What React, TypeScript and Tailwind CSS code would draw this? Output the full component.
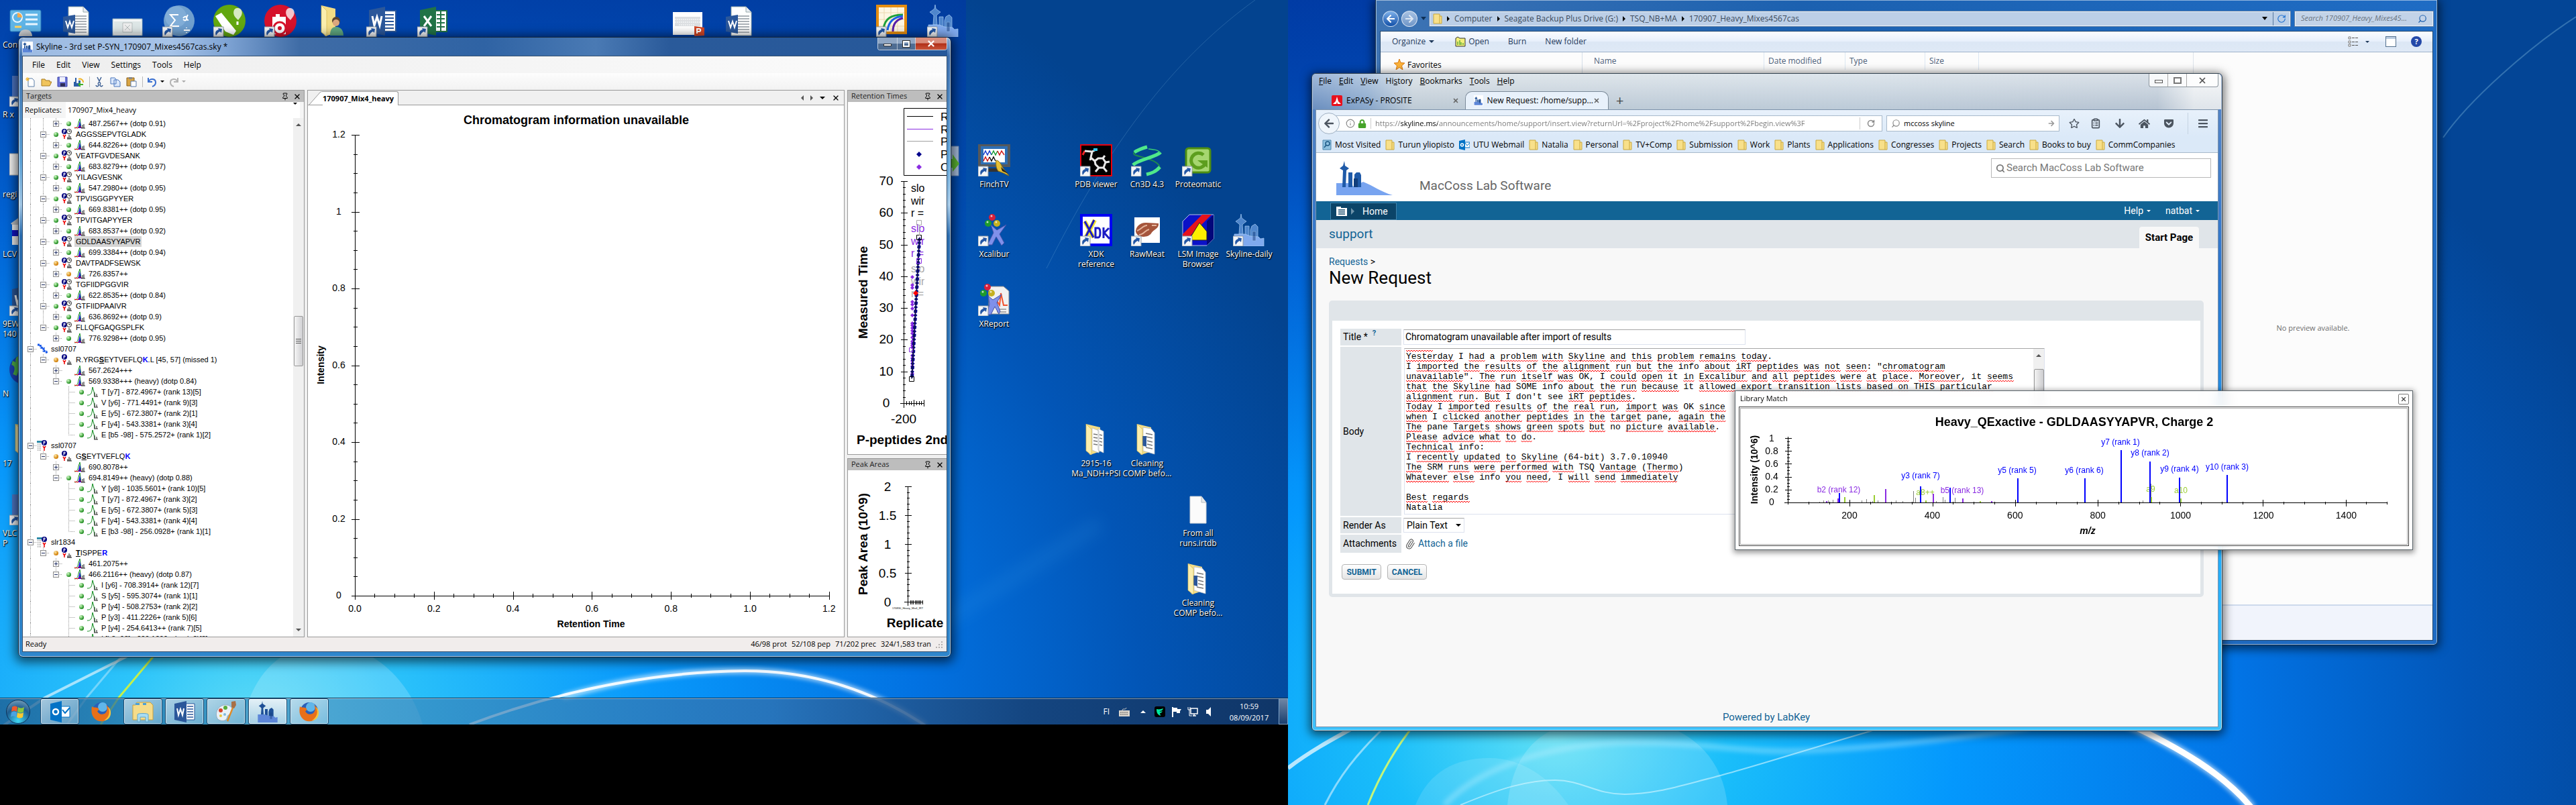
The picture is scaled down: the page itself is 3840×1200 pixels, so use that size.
import type { ReactNode } from 'react';
import { FaArrowDown, FaArrowLeft, FaBars, FaGetPocket, FaHome, FaLock, FaRegStar } from 'react-icons/fa';
import { ClipboardList, Info, Paperclip, Pin, RotateCw, Search, X } from 'lucide-react';

const range = (n: number) => Array.from({ length: n }, (_, i) => i);

/* ---------- small shared drawings ---------- */

function SkylineArt({ dark = false }: { dark?: boolean }) {
  const top = dark ? '#1d4f96' : '#4f86cc';
  const low = dark ? '#5c86d8' : '#7fa9ee';
  return (
    <g>
      <path d="M12 0l1 6 4 3 3 2-4 3-2 2 1 14h-6l1-14-2-2-4-3 3-2 4-3z" fill={top} />
      <path d="M18 18h6v24h-6zM26 24l2-6 5-3 4 4v23H26z" fill={top} />
      <path d="M2 30h16l8 3 12 1 3 3 5-1v12H2z" fill={low} />
      <path d="M29 26h5v14h-5z" fill="#173f80" opacity=".5" />
    </g>
  );
}

function ShortcutArrow() {
  return (
    <g>
      <path d="M0 33h15v15H0z" fill="#f4f6f8" stroke="#8b98a5" />
      <path d="M4 46c-2-5 0-8 4-9l-1-2 6 1-1 6-2-2c-3 1-4 3-6 6z" fill="#2457a5" />
    </g>
  );
}

function Ball({ cx, cy, color }: { cx: number; cy: number; color: string }) {
  return (
    <g>
      <circle cx={cx} cy={cy} r="5" fill={color} />
      <circle cx={cx - 1} cy={cy - 2} r="1.5" fill="#fff" opacity=".7" />
    </g>
  );
}

function FolderShape({ children }: { children?: ReactNode }) {
  return (
    <g>
      <path d="M9 1l21 5v36L15 47 9 40z" fill="#f3dc85" />
      {children}
      <path d="M9 1l8 8v38L9 41z" fill="#fbeeae" stroke="#d6b955" strokeWidth=".7" />
    </g>
  );
}

function DocLines({ x, y, n, w }: { x: number; y: number; n: number; w: number }) {
  return (
    <>
      {range(n).map((i) => (
        <path key={i} d={`M${x} ${y + i * 4}h${w}`} stroke="#8f979f" strokeWidth="1.5" />
      ))}
    </>
  );
}

const ART: Record<string, ReactNode> = {
  control: (
    <>
      <rect x="1" y="8" width="46" height="32" rx="2" fill="#5fb4e6" stroke="#2a79b8" />
      <circle cx="12" cy="19" r="7" fill="none" stroke="#e9f6ff" strokeWidth="2" />
      <path d="M12 19v-7a7 7 0 0 1 7 7z" fill="#f5a94b" />
      <path d="M24 15h18M24 22h18M24 29h18" stroke="#e9f6ff" strokeWidth="3" />
      <path d="M8 33h10" stroke="#ffd25e" strokeWidth="3" />
      <path d="M14 47c0-6 4-10 10-10s10 4 10 10z" fill="#c9cccf" />
    </>
  ),
  wordDoc: (
    <>
      <path d="M12 3h22l8 8v35H12z" fill="#fff" stroke="#9aa" />
      <path d="M34 3v8h8" fill="#e8ecf2" stroke="#9aa" />
      <DocLines x={22} y={17} n={7} w={17} />
      <path d="M4 18l18-3v28L4 40z" fill="#2b579a" />
      <path d="M8 24l3 10 3-9 3 9 3-10" fill="none" stroke="#fff" strokeWidth="2" />
    </>
  ),
  thumb: (
    <>
      <path d="M2 21h44v25H2z" fill="#f3f5f6" stroke="#8aa8b8" />
      <path d="M4 25h40v18H4z" fill="#dde6e6" />
      <path d="M17 27h14v14H17zM20 30l8 8M28 30l-8 8" fill="#eee" stroke="#b5bdbd" />
    </>
  ),
  sigma: (
    <>
      <circle cx="25" cy="24" r="23" fill="#6f9fce" />
      <circle cx="20" cy="18" r="16" fill="#8db7de" opacity=".6" />
      <path d="M24 15H12l7 8-7 9h13M31 20c6-8 8 8 0 2M38 15c-3 5-2 8 1 8M32 38h9M36 34v1M36 41v1" fill="none" stroke="#fff" strokeWidth="2" />
      <ShortcutArrow />
    </>
  ),
  corel: (
    <>
      <circle cx="24" cy="24" r="24" fill="#62a70f" />
      <path d="M3 17l9-5 22 27-4 6-12-5z" fill="#fff" />
      <path d="M36 5c7 0 9 8 4 14l-3 4-4-4c-5-6-3-14 3-14z" fill="#fff" opacity=".75" />
      <path d="M36 25v5" stroke="#fff" strokeWidth="3" />
      <ShortcutArrow />
    </>
  ),
  capture: (
    <>
      <circle cx="24" cy="24" r="24" fill="#d5112b" />
      <path d="M12 18h5v-4h6v4h9v26H12z" fill="#fff" />
      <circle cx="23" cy="35" r="9" fill="#fff" stroke="#d5112b" strokeWidth="3" />
      <circle cx="23" cy="35" r="3" fill="#d5112b" />
      <path d="M38 5c7 0 9 8 4 14l-3 4-4-4c-5-6-3-14 3-14z" fill="#fff" opacity=".75" />
      <ShortcutArrow />
    </>
  ),
  user: (
    <>
      <FolderShape />
      <circle cx="31" cy="24" r="6" fill="#5a4431" />
      <circle cx="31" cy="27" r="5" fill="#dba77e" />
      <path d="M22 46c0-9 3-13 9-13s11 4 11 13z" fill="#5fa67f" />
    </>
  ),
  word: (
    <>
      <path d="M24 9h20v31H24z" fill="#fff" stroke="#2b579a" strokeWidth="2" />
      <path d="M28 15h13M28 20h13M28 25h13M28 30h13M28 35h13" stroke="#2b579a" strokeWidth="2" />
      <path d="M4 8l24-5v43L4 41z" fill="#2b579a" />
      <path d="M9 17l3 14 4-13 4 13 3-14" fill="none" stroke="#fff" strokeWidth="3" />
      <ShortcutArrow />
    </>
  ),
  excel: (
    <>
      <path d="M24 9h20v31H24z" fill="#fff" stroke="#217346" strokeWidth="2" />
      <path d="M29 15h12M29 21h12M29 27h12M29 33h12M35 10v29" stroke="#217346" strokeWidth="2" />
      <path d="M4 8l24-5v43L4 41z" fill="#217346" />
      <path d="M10 17l11 15M21 17L10 32" stroke="#fff" strokeWidth="3" />
      <ShortcutArrow />
    </>
  ),
  ppt: (
    <>
      <path d="M1 11h44v34H1z" fill="#fff" />
      <path d="M4 18h38v14H4z" fill="#dcdfe2" />
      <path d="M4 22h38M4 26h38M10 30h24" stroke="#fff" strokeDasharray="2 1" />
      <path d="M33 32l15 2v12l-15 1z" fill="#d24726" />
      <path d="M37 43v-7h3c3 0 3 4 0 4h-2" fill="none" stroke="#fff" strokeWidth="2" />
    </>
  ),
  curve: (
    <>
      <path d="M2 2h42v40H2z" fill="#fdf6e3" stroke="#e58d10" strokeWidth="4" />
      <path d="M12 4v36M22 4v36M32 4v36M4 12h38M4 22h38M4 32h38" stroke="#ead9b0" />
      <path d="M11 36c2-16 12-21 29-21" fill="none" stroke="#1ea03a" strokeWidth="3" />
      <path d="M17 38c2-14 10-20 23-21" fill="none" stroke="#1d62e6" strokeWidth="3" />
      <path d="M25 40c0-12 6-18 15-20" fill="none" stroke="#5a1fa8" strokeWidth="3" />
      <ShortcutArrow />
    </>
  ),
  skyline: (
    <>
      <g stroke="#a9cdf3" strokeWidth=".7">
        <SkylineArt />
      </g>
      <ShortcutArrow />
    </>
  ),
  arrowDoc: (
    <>
      <path d="M6 3h41v44H6z" fill="#a9bedd" stroke="#6d87b0" />
      <path d="M30 22h8v-7l10 14-10 12v-6h-8z" fill="#5bb531" />
    </>
  ),
  finch: (
    <>
      <path d="M0 0h48v34H0z" fill="#54585c" />
      <path d="M4 3h40v27H4z" fill="#2f6fb5" />
      <path d="M8 7h32v20H8z" fill="#fff" />
      <path d="M8 16l3-6 3 6 3-6 3 6" stroke="#1c3fd0" fill="none" strokeWidth="1.5" />
      <path d="M20 16l3-6 3 6 3-6" stroke="#1e9e3a" fill="none" strokeWidth="1.5" />
      <path d="M29 10l3 6 3-6 4 6M8 25l3-6 3 6 3-6" stroke="#d21f1f" fill="none" strokeWidth="1.5" />
      <path d="M17 19l3 6 3-6 3 6" stroke="#111" fill="none" strokeWidth="1.5" />
      <path d="M14 36h20v5H14z" fill="#333" />
      <path d="M27 24c4 0 7 5 9 10l10 13-8-4-8-3c-3-4-4-10-3-16z" fill="#e6bf35" stroke="#8d6f12" />
      <path d="M34 34l11 10-9-4z" fill="#222" />
      <ShortcutArrow />
    </>
  ),
  pdb: (
    <>
      <path d="M1 1h46v46H1z" fill="#000" stroke="#e8000d" strokeWidth="2" />
      <path d="M22 25l5-4h7l4 6-3 8h-7l-5-5zM22 25l-6-5 2-9 6-3M34 21l3-4M38 27l6-1M35 35l5 6M28 35l-5 6M16 20l-1 4" fill="none" stroke="#e8e8e8" strokeWidth="3" />
      <path d="M4 16l3-6" stroke="#e22" strokeWidth="3" />
      <path d="M7 10l10 1" stroke="#e8e8e8" strokeWidth="3" />
      <path d="M20 8h6" stroke="#35c7ec" strokeWidth="4" />
      <ShortcutArrow />
    </>
  ),
  cn3d: (
    <>
      <path d="M24 4C8 8 0 13 6 16s30 6 36 16c2 4-4 8-18 12" fill="none" stroke="#1d8a4e" strokeWidth="2" />
      <path d="M44 12C38 19 10 23 3 31" fill="none" stroke="#4fe88a" strokeWidth="5" />
      <path d="M5 12c6-4 12-6 19-8M23 45c8-2 14-4 20-11" fill="none" stroke="#4fe88a" strokeWidth="5" />
      <path d="M26 7c10 1 16 2 17 6" fill="none" stroke="#3ad074" strokeWidth="1.5" />
      <ShortcutArrow />
    </>
  ),
  proteo: (
    <>
      <rect x="6" y="6" width="36" height="36" rx="4" fill="#a6d670" stroke="#4e8f12" strokeWidth="3" />
      <path d="M32 16a11 11 0 1 0 3 12" fill="none" stroke="#5d9e1e" strokeWidth="5" />
      <path d="M23 24h15v11z" fill="#5d9e1e" />
      <ShortcutArrow />
    </>
  ),
  xcal: (
    <>
      <Ball cx={21} cy={5} color="#d71f3a" />
      <Ball cx={15} cy={14} color="#1e9b2c" />
      <Ball cx={28} cy={14} color="#c5b020" />
      <path d="M42 16L28 24l-9-8 4 12-9 18h7l6-12 8 13 4-4-7-13z" fill="#7f90ea" stroke="#4453a8" />
      <ShortcutArrow />
    </>
  ),
  xreport: (
    <>
      <path d="M16 4h22l8 7v34H16z" fill="#f1f1f1" stroke="#8d8d8d" />
      <path d="M26 32l3-5 3 5 2-18 4 18h6" fill="none" stroke="#f0522d" strokeWidth="2" />
      <path d="M28 38h14M28 42h14" stroke="#aaa" strokeWidth="2" />
      <Ball cx={14} cy={5} color="#d71f3a" />
      <Ball cx={8} cy={14} color="#1e9b2c" />
      <Ball cx={20} cy={14} color="#c5b020" />
      <path d="M35 16L22 24l-7-6 2 12-4 16h6l6-12 6 11 2-4-5-13z" fill="#7f90ea" stroke="#4453a8" />
      <ShortcutArrow />
    </>
  ),
  xdk: (
    <>
      <path d="M0 0h48v48H0z" fill="#0000f4" />
      <path d="M4 4h40v40H4z" fill="#fff" />
      <path d="M7 11l13 24M22 9L8 36" stroke="#f3e52b" strokeWidth="6" />
      <path d="M7 11l13 24M21 9L8 35M23 21v14h4c4 0 4-14 0-14zM35 20v16M43 21l-7 7 8 9" fill="none" stroke="#1b1bc4" strokeWidth="3" />
      <ShortcutArrow />
    </>
  ),
  meat: (
    <>
      <path d="M5 5h38v38H5z" fill="#fff" />
      <path d="M7 26c0-8 8-14 16-13l18 1c1 8-8 9-11 15-5 7-21 7-23-3z" fill="#a5553c" />
      <path d="M9 25c6-2 9-8 15-8M12 31c7 0 9-7 15-8M31 17l7 0" fill="none" stroke="#e5b59c" strokeWidth="2" />
      <ShortcutArrow />
    </>
  ),
  lsm: (
    <>
      <path d="M1 11L11 1h36v36L37 47H1z" fill="#0b12c8" stroke="#b9bfe8" />
      <path d="M37 11L47 1v36L37 47z" fill="#03077a" />
      <path d="M1 30L30 1h14L2 43z" fill="#e5121c" />
      <path d="M26 13l11 13v13H10z" fill="#fdf000" stroke="#222" />
      <ShortcutArrow />
    </>
  ),
  folder2: (
    <FolderShape>
      <path d="M18 7l10 4v33l-10-4zM27 8l8 4v32l-8-4z" fill="#fff" stroke="#b9bcc0" strokeWidth=".8" />
      <path d="M20 16l6 1M20 21l6 1M20 26l6 1M20 31l6 1M29 17l4 1M29 22l4 1M29 27l4 1M29 32l4 1" stroke="#777" strokeWidth="1.5" />
    </FolderShape>
  ),
  folderW: (
    <FolderShape>
      <path d="M18 6l12 2 5 6v32l-17-5z" fill="#fff" stroke="#b9bcc0" strokeWidth=".8" />
      <path d="M22 15l10 2M22 20l10 2M24 26l8 2M24 31l8 2M22 36l10 2" stroke="#777" strokeWidth="1.5" />
      <path d="M16 19h7v16l-7-2z" fill="#2b579a" />
    </FolderShape>
  ),
  blank: (
    <>
      <path d="M12 5h17l7 9v31H12z" fill="#fbfbfb" stroke="#cfd3d6" />
      <path d="M29 5v9h7" fill="#e6e8ea" stroke="#b4babf" />
    </>
  ),
  rgui: (
    <>
      <path d="M4 2h40v40H4z" fill="#4f78c8" />
      <ShortcutArrow />
    </>
  ),
  page: <path d="M0 14h34v32H0z" fill="#f4f4f4" stroke="#aaa" />,
  lcv: (
    <>
      <path d="M2 14L16 4v14H6z" fill="#bfc3c7" />
      <path d="M4 16h34v30H4z" fill="#f3f3f3" />
      <path d="M4 24h34v9H4z" fill="#1414c8" />
    </>
  ),
  globe: (
    <>
      <circle cx="22" cy="24" r="22" fill="#1b3fb0" />
      <path d="M4 14c8 2 8 10 4 18M14 6c-6 6 4 12 0 22" stroke="#4db04a" strokeWidth="6" fill="none" />
    </>
  ),
};

/* ---------- desktop ---------- */

interface DesktopItem {
  col: number;
  row: number;
  art: string;
  lines: string[];
  edge?: boolean;
}

const ITEMS: DesktopItem[] = [
  { col: 1, row: 1, art: 'control', lines: ['Cont'], edge: true },
  { col: 2, row: 1, art: 'wordDoc', lines: [] },
  { col: 3, row: 1, art: 'thumb', lines: [] },
  { col: 4, row: 1, art: 'sigma', lines: [] },
  { col: 5, row: 1, art: 'corel', lines: [] },
  { col: 6, row: 1, art: 'capture', lines: [] },
  { col: 7, row: 1, art: 'user', lines: [] },
  { col: 8, row: 1, art: 'word', lines: [] },
  { col: 9, row: 1, art: 'excel', lines: [] },
  { col: 14, row: 1, art: 'ppt', lines: [] },
  { col: 15, row: 1, art: 'wordDoc', lines: [] },
  { col: 18, row: 1, art: 'curve', lines: [] },
  { col: 19, row: 1, art: 'skyline', lines: [] },
  { col: 1, row: 2, art: 'rgui', lines: ['R x'], edge: true },
  { col: 1, row: 3, art: 'page', lines: ['\u00a0', 'regi'], edge: true },
  { col: 1, row: 4, art: 'lcv', lines: ['LCV'], edge: true },
  { col: 1, row: 5, art: 'word', lines: ['9EW', '140'], edge: true },
  { col: 1, row: 6, art: 'globe', lines: ['N'], edge: true },
  { col: 1, row: 7, art: 'folder2', lines: ['17'], edge: true },
  { col: 1, row: 8, art: 'rgui', lines: ['VLC', 'P'], edge: true },
  { col: 19, row: 3, art: 'arrowDoc', lines: [] },
  { col: 20, row: 3, art: 'finch', lines: ['FinchTV'] },
  { col: 22, row: 3, art: 'pdb', lines: ['PDB viewer'] },
  { col: 23, row: 3, art: 'cn3d', lines: ['Cn3D 4.3'] },
  { col: 24, row: 3, art: 'proteo', lines: ['Proteomatic'] },
  { col: 20, row: 4, art: 'xcal', lines: ['Xcalibur'] },
  { col: 22, row: 4, art: 'xdk', lines: ['XDK', 'reference'] },
  { col: 23, row: 4, art: 'meat', lines: ['RawMeat'] },
  { col: 24, row: 4, art: 'lsm', lines: ['LSM Image', 'Browser'] },
  { col: 25, row: 4, art: 'skyline', lines: ['Skyline-daily'] },
  { col: 20, row: 5, art: 'xreport', lines: ['XReport'] },
  { col: 22, row: 7, art: 'folder2', lines: ['2915-16', 'Ma_NDH+PSI'] },
  { col: 23, row: 7, art: 'folderW', lines: ['Cleaning', 'COMP befo...'] },
  { col: 24, row: 8, art: 'blank', lines: ['From all', 'runs.irtdb'] },
  { col: 24, row: 9, art: 'folderW', lines: ['Cleaning', 'COMP befo...'] },
];

function DesktopIcons() {
  return (
    <div className="grid grid-cols-[repeat(25,76px)] grid-rows-[repeat(9,104px)] pt-[7px]">
      {ITEMS.map((s) => (
        <div
          key={`${s.col}-${s.row}`}
          style={{ gridColumn: s.col, gridRow: s.row }}
          className="flex flex-col items-center text-[12px] leading-[15px] text-white [text-shadow:0_1px_2px_#000,1px_1px_1px_#000]"
        >
          <svg viewBox="0 0 48 48" className="h-12 w-12">
            {ART[s.art]}
          </svg>
          <div className={s.edge ? 'mt-1 w-full pl-1' : 'mt-1 text-center'}>
            {s.lines.map((l) => (
              <p key={l} className="whitespace-nowrap">
                {l}
              </p>
            ))}
          </div>
        </div>
      ))}
    </div>
  );
}

function LeftWallpaper() {
  return (
    <svg viewBox="0 0 1920 1080" preserveAspectRatio="none" className="absolute inset-0 h-full w-full">
      <defs>
        <radialGradient id="lw" gradientUnits="userSpaceOnUse" cx="380" cy="1080" r="1700" gradientTransform="translate(380 1080) scale(1 .82) translate(-380 -1080)">
          <stop offset="0" stopColor="#5fdcf5" />
          <stop offset=".12" stopColor="#2cc4fa" />
          <stop offset=".35" stopColor="#0898fb" />
          <stop offset=".58" stopColor="#0272e2" />
          <stop offset=".78" stopColor="#0255b6" />
          <stop offset="1" stopColor="#03438f" />
        </radialGradient>
        <filter id="soft">
          <feGaussianBlur stdDeviation="3" />
        </filter>
        <filter id="haze" x="-20%" y="-20%" width="140%" height="140%">
          <feGaussianBlur stdDeviation="12" />
        </filter>
        <linearGradient id="topShade" x1="0" y1="0" x2="0" y2="1">
          <stop offset="0" stopColor="#0038a4" stopOpacity=".85" />
          <stop offset=".6" stopColor="#0050c8" stopOpacity="0" />
        </linearGradient>
      </defs>
      <path d="M0 0h1920v1080H0z" fill="url(#lw)" />
      <path d="M0 0h1440v1080H0z" fill="url(#topShade)" opacity=".8" />
      <path d="M1871 0C1760 80 1660 200 1560 400" fill="none" stroke="#9fd6ee" strokeWidth="1" opacity=".2" />
      <path d="M1400 930L1640 780" stroke="#4fb4f5" strokeWidth="18" opacity=".15" filter="url(#haze)" />
      <path d="M360 1080c20-90 70-120 130-120s120 50 140 120z" fill="#fff" opacity=".18" />
      <path d="M0 1085L67 1040 196 975" fill="none" stroke="#fff" strokeWidth="4" opacity=".6" />
      <path d="M100 1080L129 1040 184 975" fill="none" stroke="#fff" strokeWidth="3" opacity=".35" />
      <path d="M150 1080L177 1040 240 965" fill="none" stroke="#c4f04a" strokeWidth="3" />
      <path d="M839 1039C930 1012 1010 1000 1110 1000c110 0 200 35 270 82" fill="none" stroke="#fff" strokeWidth="9" opacity=".6" filter="url(#soft)" />
      <path d="M700 1080C780 1050 930 1002 1110 1000c110 0 200 35 270 82" fill="none" stroke="#fff" strokeWidth="4" opacity=".9" />
    </svg>
  );
}

function RightWallpaper() {
  return (
    <svg viewBox="0 0 1920 1200" preserveAspectRatio="none" className="absolute inset-0 h-full w-full">
      <defs>
        <radialGradient id="rw" gradientUnits="userSpaceOnUse" cx="400" cy="1100" r="1700" gradientTransform="translate(400 1100) scale(1 .75) translate(-400 -1100)">
          <stop offset="0" stopColor="#5fe0f5" />
          <stop offset=".15" stopColor="#1abefa" />
          <stop offset=".35" stopColor="#0498fd" />
          <stop offset=".6" stopColor="#0274e6" />
          <stop offset=".8" stopColor="#0256b8" />
          <stop offset="1" stopColor="#034596" />
        </radialGradient>
      </defs>
      <path d="M0 0h1920v1200H0z" fill="url(#rw)" />
      <path d="M0 0h1000v1200H0z" fill="url(#topShade)" />
      <path d="M1920 25C1850 70 1760 150 1722 205" fill="none" stroke="#9fd6ee" strokeWidth="2" opacity=".3" />
      <path d="M327 1200c10-90 60-130 160-130s160 50 168 130z" fill="#fff" opacity=".16" />
      <path d="M190 1200c20-50 60-70 110-70s90 30 118 70z" fill="#fff" opacity=".12" />
      <path d="M0 1145C30 1122 60 1105 110 1078" fill="none" stroke="#fff" strokeWidth="6" opacity=".7" />
      <path d="M55 1200C75 1160 100 1125 150 1078" fill="none" stroke="#fff" strokeWidth="3" opacity=".5" />
      <path d="M119 1200C135 1160 160 1115 190 1078" fill="none" stroke="#c4f47a" strokeWidth="3" />
      <path d="M233 1200C290 1140 400 1107 514 1107s160 16 260 12 240-20 330-35" fill="none" stroke="#bdf0ff" strokeWidth="9" opacity=".35" filter="url(#soft)" />
      <path d="M257 1200c60-25 100-37 141-37s60 21 104 21 80-12 135-26 150-45 238-70" fill="none" stroke="#d8f6ff" strokeWidth="2" opacity=".6" />
      <path d="M1250 1078C1330 1115 1396 1155 1437 1205" fill="none" stroke="#fff" strokeWidth="14" opacity=".6" filter="url(#soft)" />
      <path d="M1250 1078C1330 1115 1396 1155 1437 1205" fill="none" stroke="#fff" strokeWidth="9" />
    </svg>
  );
}

/* ---------- tree of targets ---------- */

interface Node {
  level: number;
  box?: '+' | '-';
  dot?: 'green' | 'orange';
  icon: 'protein' | 'list' | 'pep' | 'pepLib' | 'prec' | 'tran';
  label: ReactNode;
  selected?: boolean;
}

const prec = (label: string, dot?: Node['dot'], box: Node['box'] = '+'): Node => ({ level: 2, box, dot, icon: 'prec', label });
const pep = (label: ReactNode, dot: Node['dot'] = 'green', icon: Node['icon'] = 'pep', selected = false): Node => ({ level: 1, box: '-', dot, icon, label, selected });
const tran = (label: string): Node => ({ level: 3, dot: 'green', icon: 'tran', label });
const mod = (s: string) => <b className="underline">{s}</b>;
const heavy = (s: string) => <b className="text-[#0000ff]">{s}</b>;

const NODES: Node[] = [
  prec('487.2567++ (dotp 0.91)', 'green'),
  pep('AGGSSEPVTGLADK'),
  prec('644.8226++ (dotp 0.94)', 'green'),
  pep('VEATFGVDESANK'),
  prec('683.8279++ (dotp 0.97)', 'green'),
  pep('YILAGVESNK'),
  prec('547.2980++ (dotp 0.95)', 'green'),
  pep('TPVISGGPYYER'),
  prec('669.8381++ (dotp 0.95)', 'green'),
  pep('TPVITGAPYYER'),
  prec('683.8537++ (dotp 0.92)', 'green'),
  pep('GDLDAASYYAPVR', 'green', 'pep', true),
  prec('699.3384++ (dotp 0.94)', 'green'),
  pep('DAVTPADFSEWSK', 'orange'),
  prec('726.8357++', 'orange'),
  pep('TGFIIDPGGVIR'),
  prec('622.8535++ (dotp 0.84)', 'green'),
  pep('GTFIIDPAAIVR'),
  prec('636.8692++ (dotp 0.9)', 'green'),
  pep('FLLQFGAQGSPLFK'),
  prec('776.9298++ (dotp 0.95)', 'green'),
  { level: 0, box: '-', icon: 'protein', label: 'ssl0707' },
  pep(<>R.YRG{mod('S')}EYTVEFLQ{heavy('K')}.L [45, 57] (missed 1)</>, 'orange', 'pepLib'),
  prec('567.2624+++'),
  prec('569.9338+++ (heavy) (dotp 0.84)', 'green', '-'),
  tran('T [y7] - 872.4967+ (rank 13)[5]'),
  tran('V [y6] - 771.4491+ (rank 9)[3]'),
  tran('E [y5] - 672.3807+ (rank 2)[1]'),
  tran('F [y4] - 543.3381+ (rank 3)[4]'),
  tran('E [b5 -98] - 575.2572+ (rank 1)[2]'),
  { level: 0, box: '-', icon: 'list', label: 'ssl0707' },
  pep(<>G{mod('S')}EYTVEFLQ{heavy('K')}</>, 'orange', 'pepLib'),
  prec('690.8078++'),
  prec('694.8149++ (heavy) (dotp 0.88)', 'green', '-'),
  tran('Y [y8] - 1035.5601+ (rank 10)[5]'),
  tran('T [y7] - 872.4967+ (rank 3)[2]'),
  tran('E [y5] - 672.3807+ (rank 5)[3]'),
  tran('F [y4] - 543.3381+ (rank 4)[4]'),
  tran('E [b3 -98] - 256.0928+ (rank 1)[1]'),
  { level: 0, box: '-', icon: 'list', label: 'slr1834' },
  pep(<>{mod('T')}ISPPE{heavy('R')}</>, 'orange', 'pepLib'),
  prec('461.2075++'),
  prec('466.2116++ (heavy) (dotp 0.87)', 'green', '-'),
  tran('I [y6] - 708.3914+ (rank 12)[7]'),
  tran('S [y5] - 595.3074+ (rank 1)[1]'),
  tran('P [y4] - 508.2753+ (rank 2)[2]'),
  tran('P [y3] - 411.2226+ (rank 5)[6]'),
  tran('P [y4] - 254.6413++ (rank 7)[5]'),
  tran('I [b3 -98] - 229.1209+ (rank 3)[3]'),
];

// true when the branch at this level goes on below row i
function continues(i: number, level: number) {
  for (let j = i + 1; j < NODES.length; j++) {
    if (NODES[j].level === level) return true;
    if (NODES[j].level < level) return false;
  }
  return level === 0 || level === 3;
}

function NodeIcon({ icon }: { icon: Node['icon'] }) {
  return (
    <svg viewBox="0 0 16 16" className="h-4 w-4 shrink-0">
      {(icon === 'pep' || icon === 'pepLib' || icon === 'list') && (
        <>
          {icon === 'list' && (
            <>
              <path d="M0 1h10v3H0z" fill="#2e8ba8" />
              <path d="M1 6h5M1 9h5M1 12h5M1 15h5" stroke="#555" strokeDasharray="1 1" />
            </>
          )}
          <circle cx={icon === 'list' ? 11 : 4} cy="4" r="4" fill="#00007f" />
          <path d={icon === 'list' ? 'M10 7V2h2v2h-2' : 'M3 7V2h2v2H3'} fill="none" stroke="#fff" />
          <path d={icon === 'list' ? 'M9 9l2 3 2-3M11 12v4' : 'M2 9l2 3 2-3M4 12v3'} fill="none" stroke="#e00" strokeWidth="1.5" />
          {icon !== 'list' && <path d="M8 15h7M9 15v-3M11 15V9M13 15v-4" stroke="#111" fill="none" />}
          {icon === 'pep' && (
            <>
              <circle cx="11" cy="4" r="3.5" fill="#fff" stroke="#222" />
              <path d="M11 2v2h2" fill="none" stroke="#222" />
            </>
          )}
        </>
      )}
      {icon === 'prec' && (
        <>
          <path d="M0 15c4 0 5-3 6-8l2-6 2 14" fill="none" stroke="#0a8a1a" />
          <path d="M4 15c3-1 3-10 4-10s1 9 3 10z" fill="#1414e0" />
          <path d="M0 14l5 1 3-3 3 3" fill="none" stroke="#e00" />
          <path d="M10 15h6M12 15v-5M14 15V9" stroke="#222" fill="none" />
        </>
      )}
      {icon === 'tran' && (
        <>
          <path d="M0 13c4 0 6-1 7-6l1-6 2 7 1 6" fill="none" stroke="#0a8a1a" />
          <path d="M10 15h6M11 15V9M14 15v-4" stroke="#222" fill="none" />
        </>
      )}
      {icon === 'protein' && (
        <path d="M1 2l4 0 1 4 4 1 0 4 4 1 1 3" fill="none" stroke="#1556e8" strokeWidth="3" strokeDasharray="3 1" />
      )}
    </svg>
  );
}

function TreeRow({ node, i }: { node: Node; i: number }) {
  return (
    <li className="flex h-4 items-center whitespace-nowrap">
      {range(node.level).map((l) => (
        <span key={l} className="flex h-4 w-[19px] shrink-0 justify-center">
          {continues(i, l) && <span className="h-4 border-l border-dotted border-[#999]" />}
        </span>
      ))}
      <svg viewBox="0 0 19 16" className="h-4 w-[19px] shrink-0">
        <path d={continues(i, node.level) ? 'M9.5 0v16M9.5 8.5H19' : 'M9.5 0v8.5H19'} fill="none" stroke="#999" strokeDasharray="1 1" />
        {node.box && (
          <>
            <rect x="5.5" y="4.5" width="8" height="8" fill="#f6f6f6" stroke="#8d8d8d" />
            <path d={node.box === '+' ? 'M7 8.5h5M9.5 6v5' : 'M7 8.5h5'} stroke="#26356b" />
          </>
        )}
      </svg>
      {node.level > 0 && (
        <span className="flex w-[18px] shrink-0 justify-center">
          {node.dot === 'green' && <span className="h-[7px] w-[7px] rounded-full bg-radial-[at_35%_30%] from-[#d6ffc9] to-[#1c8a1c] to-70%" />}
          {node.dot === 'orange' && <span className="h-[7px] w-[7px] rounded-full bg-radial-[at_35%_30%] from-[#ffe9a8] to-[#cf7a00] to-70%" />}
        </span>
      )}
      <NodeIcon icon={node.icon} />
      <span className={node.selected ? 'ml-[3px] bg-[#d4d4d4] px-[2px]' : 'ml-[5px]'}>{node.label}</span>
    </li>
  );
}

/* ---------- charts ---------- */

function ChromatogramChart() {
  return (
    <svg viewBox="459 157 799 792" className="h-full w-full font-['Liberation_Sans',Arial,sans-serif]">
      <text x="859" y="185" textAnchor="middle" fontSize="18" fontWeight="bold">Chromatogram information unavailable</text>
      <g stroke="#000" shapeRendering="crispEdges">
        <path d="M529.5 201V889M524 888.5H1236.5" />
        {range(25).map((i) => {
          const r = i % 4 === 0 ? 6 : 3;
          return (
            <g key={i}>
              <path d={`M${530 - r} ${888.5 - i * 28.62}h${r * 2}`} />
              <path d={`M${529.5 + i * 29.45} ${888 - r}v${r * 2}`} />
            </g>
          );
        })}
      </g>
      <g fontSize="14" textAnchor="middle">
        {['0', '0.2', '0.4', '0.6', '0.8', '1', '1.2'].map((t, i) => (
          <text key={t} x="505" y={892 - i * 114.5}>{t}</text>
        ))}
        {['0.0', '0.2', '0.4', '0.6', '0.8', '1.0', '1.2'].map((t, i) => (
          <text key={t} x={529 + i * 117.8} y="912">{t}</text>
        ))}
        <text x="881" y="935" fontWeight="bold">Retention Time</text>
        <text transform="translate(483 544) rotate(-90)" fontWeight="bold">Intensity</text>
      </g>
    </svg>
  );
}

const diamond = (x: number, y: number, r: number) => `M${x} ${y - r}l${r} ${r}l${-r} ${r}l${-r} ${-r}z`;

const LEGEND = [
  { y: 174, t: 'R', c: '#000' },
  { y: 193, t: 'R', c: '#8a2be2' },
  { y: 211, t: 'P', c: '#a0a0a0' },
];

const REGRESSION = [
  { y: 286, c: '#000' },
  { y: 346, c: '#8a2be2' },
  { y: 406, c: '#a9a9a9' },
];

function RetentionChart() {
  return (
    <svg viewBox="1264 152 147 525" preserveAspectRatio="xMinYMin slice" className="h-full w-full font-['Liberation_Sans',Arial,sans-serif]">
      <defs>
        <clipPath id="plotClip">
          <path d="M1348 160h30v460h-30z" />
        </clipPath>
      </defs>
      <path d="M1347.5 161.5h90v100h-90z" fill="#fff" stroke="#000" />
      {LEGEND.map((l) => (
        <g key={l.y}>
          <path d={`M1352 ${l.y - 0.5}h39`} stroke={l.c} />
          <text x="1402" y={l.y + 6} fontSize="17">{l.t}</text>
        </g>
      ))}
      <path d={diamond(1370, 230, 4)} fill="#00008b" />
      <path d={diamond(1370, 249, 4)} fill="#8a2be2" />
      <text x="1402" y="236" fontSize="17">P</text>
      <text x="1402" y="255" fontSize="17">O</text>
      <g clipPath="url(#plotClip)" fontSize="16">
        {REGRESSION.map((r) => (
          <g key={r.y} fill={r.c}>
            <text x="1358" y={r.y}>slo</text>
            <text x="1358" y={r.y + 19}>win</text>
            <text x="1358" y={r.y + 37}>r =</text>
          </g>
        ))}
      </g>
      <g stroke="#000" shapeRendering="crispEdges">
        <path d="M1347.5 271v337M1342 601.5h36" />
        {range(36).map((i) => {
          const r = i % 5 === 0 ? 5 : 2;
          return <path key={i} d={`M${1348 - r} ${601.5 - i * 9.46}h${r * 2}`} />;
        })}
        {range(9).map((i) => (
          <path key={i} d={`M${1347.5 + i * 3.75} ${i % 4 ? 598 : 596}v${i % 4 ? 6 : 10}`} />
        ))}
      </g>
      {[413, 425, 429, 450, 454, 460, 470, 482, 485, 489, 493, 497, 503, 509, 512, 515, 518, 530, 534, 538, 542, 546, 557].map((y) => (
        <path key={y} d={diamond(1360, y, 3)} fill="#8a2be2" />
      ))}
      {range(52).map((i) => (
        <path key={i} d={diamond(1370.5 - i * 0.215, 357 + i * 4 + ((i * 7) % 3), 3)} fill="#00008b" />
      ))}
      <path d="M1359 565L1370.5 354" stroke="#222" />
      <path d={diamond(1365, 437, 4)} fill="#f00" />
      <g fill="none">
        <path d="M1355.5 561.5h7v7h-7zM1366.5 350.5h7v7h-7z" stroke="#000" />
        <path d="M1366.5 328.5h7v7h-7zM1370.5 336v15" stroke="#aaa" />
        <path d="M1366.5 385.5h7v7h-7zM1355.5 518.5h5v6h-5z" stroke="#8a2be2" />
      </g>
      <g fontSize="19" textAnchor="middle">
        {range(8).map((i) => (
          <text key={i} x="1321" y={607 - i * 47.3}>{i * 10}</text>
        ))}
        <text x="1347" y="631">-200</text>
        <text x="1277" y="662" textAnchor="start" fontWeight="bold">P-peptides 2nd</text>
        <text transform="translate(1293 436) rotate(-90)" fontWeight="bold">Measured Time</text>
      </g>
    </svg>
  );
}

function PeakAreaChart() {
  return (
    <svg viewBox="1264 701 147 248" preserveAspectRatio="xMinYMin slice" className="h-full w-full font-['Liberation_Sans',Arial,sans-serif]">
      <g stroke="#000" shapeRendering="crispEdges">
        <path d="M1353.5 725v178M1348 897.5h28" />
        {range(21).map((i) => {
          const r = i % 5 === 0 ? 5 : 2;
          return <path key={i} d={`M${1354 - r} ${897.5 - i * 8.6}h${r * 2}`} />;
        })}
        {range(9).map((i) => (
          <path key={i} d={`M${1357.5 + i * 2.2} 895v6`} />
        ))}
      </g>
      <g fontSize="19" textAnchor="middle">
        {['0', '0.5', '1', '1.5', '2'].map((t, i) => (
          <text key={t} x="1323" y={904 - i * 43}>{t}</text>
        ))}
        <text x="1364" y="935" fontWeight="bold">Replicate</text>
        <text x="1353" y="908" fontSize="4">170830_Heavy_Mix4_IRT</text>
        <text transform="translate(1293 811) rotate(-90)" fontWeight="bold">Peak Area (10^9)</text>
      </g>
    </svg>
  );
}

// [m/z position, top] of the unmatched peaks
const NOISE = [[2712, 748], [2718, 746], [2725, 746], [2732, 745], [2739, 747], [2775, 746], [2782, 744], [2791, 747], [2799, 746], [2810, 747], [2826, 746], [2836, 747], [2852, 732], [2855, 742], [2886, 747], [2896, 741], [2899, 745], [2914, 742], [3194, 746], [3206, 721]];

const PEAKS = [
  { x: 2742, top: 735, c: '#0000ff' },
  { x: 2863, top: 725, c: '#0000ff' },
  { x: 2907, top: 727, c: '#0000ff' },
  { x: 3008, top: 713, c: '#0000ff' },
  { x: 3108, top: 713, c: '#0000ff' },
  { x: 3162, top: 671, c: '#0000ff' },
  { x: 3205, top: 688, c: '#0000ff' },
  { x: 3249, top: 712, c: '#0000ff' },
  { x: 3320, top: 708, c: '#0000ff' },
  { x: 2723, top: 747, c: '#8a2be2' },
  { x: 2740, top: 743, c: '#8a2be2' },
  { x: 2811, top: 729, c: '#8a2be2' },
  { x: 2882, top: 736, c: '#8a2be2' },
  { x: 2926, top: 743, c: '#8a2be2' },
  { x: 2969, top: 747, c: '#8a2be2' },
  { x: 2750, top: 741, c: '#9acd32' },
  { x: 2794, top: 738, c: '#9acd32' },
  { x: 2871, top: 746, c: '#9acd32' },
  { x: 2952, top: 747, c: '#9acd32' },
  { x: 3207, top: 741, c: '#9acd32' },
  { x: 3251, top: 743, c: '#9acd32' },
];

const PEAK_LABELS = [
  { x: 2741, y: 734, t: 'b2 (rank 12)', c: '#8a2be2' },
  { x: 2863, y: 713, t: 'y3 (rank 7)', c: '#0000ff' },
  { x: 2870, y: 738, t: 'a8++', c: '#9acd32' },
  { x: 2925, y: 735, t: 'b5 (rank 13)', c: '#8a2be2' },
  { x: 3007, y: 705, t: 'y5 (rank 5)', c: '#0000ff' },
  { x: 3107, y: 705, t: 'y6 (rank 6)', c: '#0000ff' },
  { x: 3161, y: 663, t: 'y7 (rank 1)', c: '#0000ff' },
  { x: 3205, y: 679, t: 'y8 (rank 2)', c: '#0000ff' },
  { x: 3249, y: 703, t: 'y9 (rank 4)', c: '#0000ff' },
  { x: 3320, y: 700, t: 'y10 (rank 3)', c: '#0000ff' },
  { x: 3206, y: 733, t: 'a9', c: '#9acd32' },
  { x: 3251, y: 735, t: 'a10', c: '#9acd32' },
];

function SpectrumChart() {
  return (
    <svg viewBox="2595 609 993 202" className="h-full w-full font-['Liberation_Sans',Arial,sans-serif]">
      <text x="3092" y="635" textAnchor="middle" fontSize="18" fontWeight="bold">Heavy_QExactive - GDLDAASYYAPVR, Charge 2</text>
      <g stroke="#000" shapeRendering="crispEdges">
        <path d="M2665.5 651v101M2660 749.5H3559" />
        {range(21).map((i) => {
          const r = i % 4 === 0 ? 5 : 2;
          return <path key={i} d={`M${2665.5 - r} ${749.5 - i * 4.8}h${r * 2}`} />;
        })}
        {range(30).map((i) => {
          const r = (i + 1) % 4 === 0 ? 5 : 2;
          return <path key={i} d={`M${2665.5 + i * 30.8} ${749.5 - r}v${r * 2}`} />;
        })}
      </g>
      <g fontSize="12" textAnchor="middle">
        {PEAK_LABELS.map((l) => (
          <text key={l.t} x={l.x} y={l.y} fill={l.c}>{l.t}</text>
        ))}
      </g>
      <g shapeRendering="crispEdges">
        {NOISE.map(([x, top]) => (
          <path key={x} d={`M${x} ${top}h1V749h-1z`} fill="#808080" />
        ))}
        {PEAKS.map((p) => (
          <path key={p.x} d={`M${p.x - 1} ${p.top}h2V749h-2z`} fill={p.c} />
        ))}
      </g>
      <g fontSize="14" textAnchor="middle">
        {['0', '0.2', '0.4', '0.6', '0.8', '1'].map((t, i) => (
          <text key={t} x="2641" y={753 - i * 19.1}>{t}</text>
        ))}
        {range(7).map((i) => (
          <text key={i} x={2757 + i * 123.4} y="773">{200 + i * 200}</text>
        ))}
        <text x="3112" y="796" fontWeight="bold" fontStyle="italic">m/z</text>
        <text transform="translate(2620 700) rotate(-90)" fontWeight="bold">Intensity (10^6)</text>
      </g>
    </svg>
  );
}

/* ---------- Skyline window ---------- */

function PaneHeader({ title }: { title: string }) {
  return (
    <div className="flex h-[17px] shrink-0 items-center bg-[#bdbdbd] pr-1 pl-[5px]">
      <h2 className="flex-1 whitespace-nowrap text-[#222]">{title}</h2>
      <button aria-label={`Pin ${title}`} className="mr-1 flex w-4 justify-center">
        <Pin className="h-3 w-3" strokeWidth={2} />
      </button>
      <button aria-label={`Close ${title}`}>
        <X className="h-3 w-3" strokeWidth={2.5} />
      </button>
    </div>
  );
}

const TOOLBAR: { name: string; art: ReactNode }[] = [
  {
    name: 'New',
    art: (
      <>
        <path d="M5 3h6l3 3v9H5z" fill="#fff" stroke="#5c7ea8" />
        <path d="M1 4h6M4 1v6M2 2l4 4M6 2L2 6" stroke="#f2b01e" />
      </>
    ),
  },
  { name: 'Open', art: <path d="M1 14V4h5l1 2h6v2h3l-3 6z" fill="#f0c45c" stroke="#a87a1c" /> },
  {
    name: 'Save',
    art: (
      <>
        <path d="M1 1h14v14H1z" fill="#6a74d8" stroke="#3a42a8" />
        <path d="M4 1h8v7H4z" fill="#eef0fc" />
        <path d="M5 10h7v5H5z" fill="#2e2e5a" />
      </>
    ),
  },
  {
    name: 'Publish',
    art: (
      <>
        <path d="M1 15V8h2V2h2v8h3V6h3v9z" fill="#2c5ea8" />
        <path d="M8 4a5 5 0 0 1 7 5" fill="none" stroke="#f0b429" strokeWidth="2" />
        <path d="M15 11h-4V8l-4 4 4 4v-3h4z" fill="#3fae2a" />
      </>
    ),
  },
  { name: 'Cut', art: <path d="M5 1l5 10M11 1L6 11M3 13a2 2 0 1 0 3-2M13 13a2 2 0 1 1-3-2" fill="none" stroke="#3d5f94" strokeWidth="1.5" /> },
  { name: 'Copy', art: <path d="M1 2h6l2 2v7H1zM6 5h6l3 3v7H6z" fill="#dbe8fb" stroke="#4a76bd" /> },
  {
    name: 'Paste',
    art: (
      <>
        <path d="M1 2h11v12H1z" fill="#d9a545" stroke="#8a611b" />
        <path d="M4 1h5v3H4z" fill="#888" />
        <path d="M7 7h8v8H7z" fill="#fff" stroke="#5a7bab" />
      </>
    ),
  },
];

function ToolIcon({ i }: { i: number }) {
  return (
    <button aria-label={TOOLBAR[i].name} className="mr-2">
      <svg viewBox="0 0 16 16" className="h-4 w-4">{TOOLBAR[i].art}</svg>
    </button>
  );
}

function Caret() {
  return <span className="border-x-[3px] border-t-[3px] border-x-transparent border-t-current" />;
}

function SkylineWindow() {
  return (
    <section className="absolute top-[55px] right-[502px] bottom-[100px] left-[27px] flex flex-col rounded-[7px] border border-[#14263c] bg-[linear-gradient(180deg,#8fb0d8_0%,#3d6fae_3%,#5fa4d8_20%,#a5c9e6_27%,#2a6cae_32%,#2f86cc_100%)] px-[5px] pb-[7px] shadow-[0_3px_16px_4px_rgba(0,0,0,0.6)] ring-1 ring-white/60 ring-inset">
      <header className="flex h-[27px] shrink-0 items-center rounded-t-[6px] bg-[linear-gradient(90deg,#9dbbe2_0%,#a6c3e8_16%,#7fa4d4_22%,#3f6ca6_30%,#2f63a4_50%,#4a7ab4_62%,#2a5a9a_70%,#26589a_100%)]">
        <svg viewBox="0 0 48 48" className="mr-[5px] h-4 w-4 bg-white">
          <SkylineArt dark />
        </svg>
        <h1 className="flex-1 text-[12px]">Skyline - 3rd set P-SYN_170907_Mixes4567cas.sky *</h1>
        <div className="mb-2 flex h-[19px] self-start overflow-hidden rounded-b-[4px] border border-t-0 border-white/70 text-white">
          <button aria-label="Minimize" className="flex w-[29px] items-center justify-center border-r border-white/50 bg-[linear-gradient(#8fa6c4_50%,#4e6c92_50%)]">
            <span className="mt-1 h-[4px] w-3 border border-[#333] bg-white" />
          </button>
          <button aria-label="Maximize" className="flex w-[27px] items-center justify-center border-r border-white/50 bg-[linear-gradient(#8fa6c4_50%,#4e6c92_50%)]">
            <span className="h-[9px] w-[10px] border-2 border-white outline outline-[#333]" />
          </button>
          <button aria-label="Close" className="flex w-[46px] items-center justify-center bg-[linear-gradient(#d98d7c_45%,#b02e17_50%,#c9553a)]">
            <X className="h-[14px] w-[14px]" strokeWidth={4} />
          </button>
        </div>
      </header>
      <div className="flex min-h-0 flex-1 flex-col border border-[#33506f] bg-[#f0f0f0]">
        <nav className="flex h-[25px] shrink-0 items-center gap-[17px] bg-linear-to-r from-[#eeeeee] to-[#fbfbfb] pl-[14px] text-[12px]">
          {['File', 'Edit', 'View', 'Settings', 'Tools', 'Help'].map((m) => (
            <button key={m}>{m}</button>
          ))}
        </nav>
        <div className="flex h-[25px] shrink-0 items-center bg-linear-to-b from-[#fdfdfd] to-[#f2f2f2] pl-[3px]">
          <ToolIcon i={0} />
          <ToolIcon i={1} />
          <ToolIcon i={2} />
          <ToolIcon i={3} />
          <span className="mr-[6px] h-4 border-l border-[#bbb]" />
          <ToolIcon i={4} />
          <ToolIcon i={5} />
          <ToolIcon i={6} />
          <span className="mr-[6px] h-4 border-l border-[#bbb]" />
          <button aria-label="Undo" className="mr-[6px] flex items-center gap-1">
            <svg viewBox="0 0 16 16" className="h-4 w-4">
              <path d="M2 2v6h6M2 8c3-6 11-5 11 1 0 3-2 5-5 6" fill="none" stroke="#3a6fd0" strokeWidth="2" />
            </svg>
            <Caret />
          </button>
          <button aria-label="Redo" className="flex items-center gap-1 text-[#aaa]">
            <svg viewBox="0 0 16 16" className="h-4 w-4">
              <path d="M14 2v6H8M14 8C11 2 3 3 3 9c0 3 2 5 5 6" fill="none" stroke="#b4b4b4" strokeWidth="2" />
            </svg>
            <Caret />
          </button>
        </div>
        <div className="flex min-h-0 flex-1 gap-1 text-[11px]">
          <div className="flex w-[420px] shrink-0 flex-col border border-l-0 border-[#999] bg-white">
            <PaneHeader title="Targets" />
            <div className="flex h-6 shrink-0 items-center bg-[#f5f5f5] pl-[3px]">
              <label htmlFor="replicates" className="w-[61px]">Replicates:</label>
              <div className="relative mr-[6px] flex h-full flex-1 items-center bg-white">
                <select id="replicates" className="w-full appearance-none pl-[3px] outline-none">
                  <option>170907_Mix4_heavy</option>
                </select>
                <span className="pointer-events-none absolute right-1">
                  <Caret />
                </span>
              </div>
            </div>
            <div className="flex min-h-0 flex-1">
              <ul className="min-w-0 flex-1 overflow-hidden pl-[2px] font-['Liberation_Sans',Arial,sans-serif]">
                {NODES.map((n, i) => (
                  <TreeRow key={i} node={n} i={i} />
                ))}
              </ul>
              <div className="flex w-4 flex-col items-center bg-[#f0f0f0] py-2 text-[#555]">
                <span className="border-x-[4px] border-b-[4px] border-x-transparent border-b-current" />
                <div className="my-auto flex h-[75px] w-[14px] translate-y-[-54px] flex-col items-center justify-center gap-[2px] rounded-[2px] border border-[#979797] bg-linear-to-r from-[#f5f5f5] to-[#cfcfd2]">
                  <span className="h-px w-2 bg-[#555]" />
                  <span className="h-px w-2 bg-[#555]" />
                  <span className="h-px w-2 bg-[#555]" />
                </div>
                <span className="border-x-[4px] border-t-[4px] border-x-transparent border-t-current" />
              </div>
            </div>
          </div>
          <div className="flex min-w-0 flex-1 flex-col border border-[#999] bg-white">
            <div className="flex h-[22px] shrink-0 items-end border-b border-[#999] bg-[#f0f0f0]">
              <svg viewBox="0 0 20 20" className="ml-[2px] h-5 w-5 shrink-0">
                <path d="M0 20L15 3c1-2 3-2.500 5-2.500V20z" fill="#fff" />
                <path d="M0 20L15 3c1-2 3-2.500 5-2.500" fill="none" stroke="#999" />
              </svg>
              <button className="-mb-px flex h-[21px] items-center rounded-tr-[3px] border-t border-r border-[#999] bg-white pr-[6px] font-bold">
                170907_Mix4_heavy
              </button>
              <div className="ml-auto flex items-center gap-[10px] pr-[6px] pb-1 text-black">
                <button aria-label="Scroll left" className="border-y-[4px] border-r-[4px] border-y-transparent border-r-[#555]" />
                <button aria-label="Scroll right" className="border-y-[4px] border-l-[4px] border-y-transparent border-l-[#555]" />
                <button aria-label="Tab list" className="border-x-[4px] border-t-[4px] border-x-transparent border-t-black" />
                <button aria-label="Close tab">
                  <X className="h-3 w-3" strokeWidth={2.5} />
                </button>
              </div>
            </div>
            <div className="min-h-0 flex-1">
              <ChromatogramChart />
            </div>
          </div>
          <div className="flex w-[148px] shrink-0 flex-col gap-[5px] overflow-hidden">
            <div className="flex min-h-0 flex-1 flex-col border border-r-0 border-[#999] bg-white">
              <PaneHeader title="Retention Times" />
              <div className="min-h-0 flex-1">
                <RetentionChart />
              </div>
            </div>
            <div className="flex h-[267px] shrink-0 flex-col border border-r-0 border-[#999] bg-white">
              <PaneHeader title="Peak Areas" />
              <div className="min-h-0 flex-1">
                <PeakAreaChart />
              </div>
            </div>
          </div>
        </div>
        <footer className="flex h-[21px] shrink-0 items-center bg-[#f1edec] px-1 text-[11px]">
          <span className="flex-1">Ready</span>
          <span className="mr-[7px] flex gap-[7px]">
            <span>46/98 prot</span>
            <span>52/108 pep</span>
            <span>71/202 prec</span>
            <span>324/1,583 tran</span>
          </span>
          <svg viewBox="0 0 12 12" className="h-3 w-3">
            <path d="M8 1h2v2H8zM4 5h2v2H4zM8 5h2v2H8zM0 9h2v2H0zM4 9h2v2H4zM8 9h2v2H8z" fill="#b3afae" />
          </svg>
        </footer>
      </div>
    </section>
  );
}

/* ---------- taskbar ---------- */

function FirefoxArt() {
  return (
    <>
      <circle cx="16" cy="15" r="13" fill="#2a5fb8" />
      <circle cx="18" cy="9" r="7" fill="#5fb6ea" />
      <path d="M2 8c2 2 4 1 8 2 3 1 3 4 0 5 2 5 8 6 12 3 4-4 3-9 1-12 8 5 8 14 4 19C22 32 10 32 5 25 1 20 1 14 2 8z" fill="#e8701a" />
      <path d="M26 9c4 8 1 16-6 20 6 0 11-6 10-13-.5-3-2-6-4-7z" fill="#f8c53a" />
    </>
  );
}

const TASKS: { name: string; look: 'open' | 'pinned' | 'active'; art: ReactNode }[] = [
  {
    name: 'Outlook',
    look: 'open',
    art: (
      <>
        <path d="M18 8h13v16H18z" fill="#fff" stroke="#0072c6" />
        <path d="M20 13l4 5 7-8" fill="none" stroke="#0072c6" strokeWidth="2" />
        <path d="M2 4l17-4v32L2 28z" fill="#0072c6" />
        <circle cx="10" cy="16" r="4" fill="none" stroke="#fff" strokeWidth="2.5" />
      </>
    ),
  },
  { name: 'Firefox', look: 'pinned', art: <FirefoxArt /> },
  {
    name: 'Explorer',
    look: 'open',
    art: (
      <>
        <path d="M1 6h4l2-4h20l4 4v22H1z" fill="#f5dc8a" stroke="#c9a13e" />
        <path d="M5 3h6v3H5zM16 3h5v3h-5z" fill="#4aa0d8" />
        <path d="M8 31V20c0-2 16-2 16 0v11h-4v-7h-8v7z" fill="#a8dcf2" stroke="#5fa6c8" />
      </>
    ),
  },
  {
    name: 'Word',
    look: 'open',
    art: (
      <>
        <path d="M16 4h15v24H16z" fill="#fff" stroke="#2b579a" />
        <path d="M20 8h9M20 12h9M20 16h9M20 20h9M20 24h9" stroke="#2b579a" strokeWidth="1.5" />
        <path d="M1 4l18-4v32L1 28z" fill="#2b579a" />
        <path d="M5 11l2 10 3-9 3 9 2-10" fill="none" stroke="#fff" strokeWidth="2" />
      </>
    ),
  },
  {
    name: 'Paint',
    look: 'open',
    art: (
      <>
        <path d="M3 26C-2 16 6 4 18 6c9 2 10 12 3 14-5 2-2 7-7 9-4 1-9 0-11-3z" fill="#e9f1f7" stroke="#93abc0" />
        <circle cx="8" cy="14" r="3" fill="#d8432a" />
        <circle cx="15" cy="10" r="3" fill="#58ad3c" />
        <circle cx="14" cy="20" r="2" fill="#7fb9dc" />
        <circle cx="8" cy="22" r="2" fill="#e9c63d" />
        <path d="M28 8L19 31l-2-2 9-22z" fill="#e08a24" />
        <path d="M24 1l6-1 1 6-3 5-4-2z" fill="#a86f45" />
      </>
    ),
  },
  {
    name: 'Skyline',
    look: 'active',
    art: (
      <g transform="scale(.667)">
        <SkylineArt dark />
      </g>
    ),
  },
  { name: 'Firefox window', look: 'open', art: <FirefoxArt /> },
];

const TASK_LOOK = {
  open: 'border border-[#1d4b70] bg-linear-to-br from-white/60 to-white/25 ring-1 ring-white/50 ring-inset',
  pinned: 'border border-transparent',
  active: 'border border-[#1d4b70] bg-linear-to-b from-white/85 to-white/50 ring-1 ring-white/70 ring-inset',
};

function Taskbar() {
  return (
    <footer className="absolute inset-x-0 bottom-0 flex h-10 items-stretch border-t border-[#0d3353] bg-[linear-gradient(90deg,rgba(30,90,140,0.75),rgba(60,140,190,0.65)_25%,rgba(50,110,170,0.75)_60%,rgba(22,66,120,0.9)_80%,rgba(16,52,100,0.95))] text-white shadow-[inset_0_1px_0_rgba(255,255,255,0.45)]">
      <button aria-label="Start" className="flex w-[54px] items-center justify-center">
        <span className="flex h-9 w-9 items-center justify-center rounded-full border border-[#0e3358] bg-[radial-gradient(circle_at_50%_90%,#3fd8f5,#1d5c90_55%,#8fb0c4)]">
          <svg viewBox="0 0 24 24" className="h-6 w-6">
            <path d="M3 5c3-2 5-2 8 0l-1 7c-3-2-5-2-8 0z" fill="#f0592a" />
            <path d="M12 5c3 2 6 2 9 0l-1 7c-3 2-6 2-9 0z" fill="#8cc63c" />
            <path d="M2 13c3-2 5-2 8 0l-1 7c-3-2-6-2-8 0z" fill="#4aa3e0" />
            <path d="M11 13c3 2 6 2 9 0l-1 7c-3 2-6 2-9 0z" fill="#fdc82f" />
          </svg>
        </span>
      </button>
      <div className="flex gap-1 pl-[6px]">
        {TASKS.map((t) => (
          <button key={t.name} aria-label={t.name} className={`flex w-[58px] items-center justify-center rounded-[3px] ${TASK_LOOK[t.look]}`}>
            <svg viewBox="0 0 32 32" className="h-8 w-8">{t.art}</svg>
          </button>
        ))}
      </div>
      <div className="ml-auto flex items-center text-[11px]">
        <span className="mr-[14px] text-[12px]">FI</span>
        <svg viewBox="0 0 16 14" className="mr-4 h-[14px] w-4">
          <path d="M0 5h16v9H0z" fill="#d9d4cc" />
          <path d="M2 8h12M2 11h12" stroke="#555" strokeDasharray="2 1" />
          <path d="M5 5c0-4 5 0 6-4" fill="none" stroke="#d9d4cc" />
        </svg>
        <span className="mr-[13px] border-x-[4px] border-b-[4px] border-x-transparent border-b-white" />
        <svg viewBox="0 0 16 16" className="mr-[9px] h-4 w-4">
          <rect width="16" height="16" rx="3" fill="#000" />
          <path d="M3 4c4 1 7 0 10-1-1 3-3 4-6 4 2 1 3 1 5 0-1 2-2 3-4 3l1 4C4 12 3 9 3 4z" fill="#00e8a0" />
        </svg>
        <svg viewBox="0 0 16 16" className="mr-2 h-4 w-4">
          <path d="M2 1v15" stroke="#fff" strokeWidth="2" />
          <path d="M3 2h6v2h6l-2 3v3H8V8H3z" fill="#fff" />
        </svg>
        <svg viewBox="0 0 16 16" className="mr-2 h-4 w-4">
          <path d="M5 3h10v8H5zM8 14h5M10 11v3" fill="none" stroke="#fff" strokeWidth="1.5" />
          <path d="M1 1v4h3V1M3 5v9h4" fill="none" stroke="#fff" />
        </svg>
        <svg viewBox="0 0 16 16" className="mr-4 h-4 w-4">
          <path d="M4 5h3l4-4v14l-4-4H4z" fill="#fff" />
        </svg>
        <div className="w-[72px] text-center leading-[17px]">
          <p>10:59</p>
          <p>08/09/2017</p>
        </div>
        <button aria-label="Show desktop" className="ml-2 h-full w-[14px] border border-[#7fa3c8] bg-linear-to-b from-white/40 to-white/5" />
      </div>
    </footer>
  );
}

/* ---------- Explorer window ---------- */

const CRUMBS = ['Computer', 'Seagate Backup Plus Drive (G:)', 'TSQ_NB+MA', '170907_Heavy_Mixes4567cas'];

function FolderMini() {
  return (
    <svg viewBox="0 0 14 16" className="h-4 w-[14px] shrink-0">
      <path d="M1 1h9v3h3v11H1z" fill="#f8e08a" stroke="#cba83a" />
      <path d="M10 4v11" stroke="#cba83a" />
    </svg>
  );
}

function ExplorerWindow() {
  return (
    <section className="absolute top-0 right-[206px] bottom-[238px] left-[130px] flex flex-col rounded-b-[6px] border border-t-0 border-[#12304f] bg-[linear-gradient(90deg,#3e74b4,#1c61b0_40%,#1f6cc4)] px-[6px] pb-[6px] text-[12px] shadow-[0_3px_14px_3px_rgba(0,0,0,0.55)] ring-1 ring-white/50 ring-inset">
      <header className="flex h-[46px] shrink-0 items-center pt-[9px]">
        <button aria-label="Back" className="ml-1 flex h-6 w-6 items-center justify-center rounded-full border border-white/70 bg-linear-to-b from-[#7fb2ea] to-[#0d4fa8] text-white">
          <FaArrowLeft className="h-[14px] w-[14px]" />
        </button>
        <button aria-label="Forward" className="ml-1 flex h-6 w-6 items-center justify-center rounded-full border border-white/70 bg-linear-to-b from-[#a9c2e2] to-[#6f96c8] text-white/70">
          <FaArrowLeft className="h-[14px] w-[14px] rotate-180" />
        </button>
        <span className="mx-[5px] border-x-[4px] border-t-[5px] border-x-transparent border-t-[#0e2f55]" />
        <div className="flex h-[22px] flex-1 items-center border border-white/70 bg-[#bccfe7] pl-1 text-[#3b4a5c] outline outline-[#5d7fa8]">
          <FolderMini />
          {CRUMBS.map((c) => (
            <span key={c} className="flex items-center whitespace-nowrap">
              <span className="mx-[7px] border-y-[4px] border-l-[4px] border-y-transparent border-l-black" />
              <a href="#folder">{c}</a>
            </span>
          ))}
          <span className="mr-2 ml-auto border-x-[4px] border-t-[5px] border-x-transparent border-t-black" />
          <button aria-label="Refresh" className="flex h-full w-[25px] items-center justify-center border-l border-[#55779f] text-[#1d6fd0]">
            <RotateCw className="h-[14px] w-[14px]" />
          </button>
        </div>
        <div className="ml-[7px] flex h-[22px] w-[206px] items-center border border-white/70 bg-[#c3d3e8] px-2 outline outline-[#5d7fa8]">
          <input aria-label="Search folder" placeholder="Search 170907_Heavy_Mixes45..." className="min-w-0 flex-1 text-[11px] italic outline-none placeholder:text-[#6a7480]" />
          <Search className="h-[14px] w-[14px] -scale-x-100 text-[#1d5fae]" />
        </div>
      </header>
      <div className="flex min-h-0 flex-1 flex-col border border-[#1e456e] bg-[#fcfcfc]">
        <div className="flex h-[31px] shrink-0 items-center border-b border-[#9fb2cb] bg-[linear-gradient(#fafcff,#e8f0fb_48%,#dce7f5_52%,#dfe9f6)] pl-[17px] text-[#1e395b]">
          <button className="mr-[31px] flex items-center gap-[5px]">
            Organize
            <span className="border-x-[4px] border-t-[4px] border-x-transparent border-t-current" />
          </button>
          <button className="mr-[28px] flex items-center gap-1">
            <svg viewBox="0 0 16 16" className="h-4 w-4">
              <path d="M1 3l3-2 3 2h8v12H1z" fill="#f4f07a" stroke="#333" />
              <path d="M4 13V8M7 13V6M9 13V9M12 13v-3" stroke="#1d8a1d" />
            </svg>
            Open
          </button>
          <button className="mr-[28px]">Burn</button>
          <button>New folder</button>
          <div className="ml-auto flex items-center gap-[14px] pr-4">
            <button aria-label="View options" className="mr-[10px] flex items-center gap-[10px]">
              <svg viewBox="0 0 16 16" className="h-4 w-4">
                <path d="M1 1h3v3H1zM1 7h3v3H1zM1 12h3v3H1z" fill="#fff" stroke="#777" />
                <path d="M6 2.5h9M6 8.5h9M6 13.5h9" stroke="#555" strokeDasharray="4 1" />
              </svg>
              <Caret />
            </button>
            <button aria-label="Preview pane" className="h-4 w-4 border border-[#55718f] bg-white shadow-[inset_0_3px_0_#b9cbe0]" />
            <button aria-label="Help" className="ml-2 h-4 w-4 rounded-full bg-[#2348a8] text-center text-[11px] leading-4 font-bold text-white">?</button>
          </div>
        </div>
        <div className="flex min-h-0 flex-1">
          <div className="flex w-[301px] shrink-0 items-start gap-1 border-r border-[#d5dfe9] px-5 pt-[10px]">
            <svg viewBox="0 0 16 16" className="h-4 w-4">
              <path d="M8 0l2 5.5 6 .5-4.5 4L13 16l-5-3.5L3 16l1.5-6L0 6l6-.5z" fill="#fcb33a" stroke="#d87a10" />
            </svg>
            <span className="leading-[18px]">Favorites</span>
          </div>
          <div className="flex w-[911px] shrink-0 items-start border-r border-[#dde3ea] text-[#4c607a]">
            <button className="h-[26px] w-[271px] border-r border-[#dce7f2] pl-[17px] text-left">Name</button>
            <button className="h-[26px] w-[121px] border-r border-[#dce7f2] pl-[6px] text-left">Date modified</button>
            <button className="h-[26px] w-[119px] border-r border-[#dce7f2] pl-[6px] text-left">Type</button>
            <button className="h-[26px] w-[80px] border-r border-[#dce7f2] pl-[6px] text-left">Size</button>
          </div>
          <div className="flex flex-1 items-center justify-center text-[11px] text-[#6d6d6d]">No preview available.</div>
        </div>
        <div className="h-[53px] shrink-0 border-t-2 border-[#cdd9ec] bg-[#f1f4fc]" />
      </div>
    </section>
  );
}

/* ---------- Firefox window ---------- */

const BOOKMARKS = ['Most Visited', 'Turun yliopisto', 'UTU Webmail', 'Natalia', 'Personal', 'TV+Comp', 'Submission', 'Work', 'Plants', 'Applications', 'Congresses', 'Projects', 'Search', 'Books to buy', 'CommCompanies'];

const BODY = [
  'Yesterday I had a problem with Skyline and this problem remains today.',
  'I imported the results of the alignment run but the info about iRT peptides was not seen: "chromatogram',
  'unavailable". The run itself was OK, I could open it in Excalibur and all peptides were at place. Moreover, it seems',
  'that the Skyline had SOME info about the run because it allowed export transition lists based on THIS particular',
  "alignment run. But I don't see iRT peptides.",
  'Today I imported results of the real run, import was OK since',
  'when I clicked another peptides in the target pane, again the',
  'The pane Targets shows green spots but no picture available.',
  'Please advice what to do.',
  'Technical info:',
  'I recently updated to Skyline (64-bit) 3.7.0.10940',
  'The SRM runs were performed with TSQ Vantage (Thermo)',
  'Whatever else info you need, I will send immediately',
  '',
  'Best regards',
  'Natalia',
];

const KNOWN_WORDS = ['I', 'a', 'it', 'OK', 'SOME', 'info', 'see', 'don', 't', 'pane', 'no', 'THIS', 'SRM', 'TSQ', 'bit', 'Natalia'];

const CHAR = 7.8;
const LINE = 15;

// one zigzag under every word the spelling checker does not know
function squiggles() {
  const parts: string[] = ['M0 -2' + 'l2 2l2 -2'.repeat(10)];
  BODY.forEach((line, row) => {
    for (const m of line.matchAll(/[A-Za-z]+/g)) {
      if (KNOWN_WORDS.includes(m[0])) continue;
      const y = row * LINE + 13;
      const steps = Math.round((m[0].length * CHAR) / 4);
      parts.push(`M${m.index * CHAR} ${y}` + 'l2 2l2 -2'.repeat(steps));
    }
  });
  return parts.join('');
}

function MessageBox() {
  return (
    <div className="relative my-[2px] ml-px h-[248px] w-[955px] border border-[#dde2ee] border-t-[#a6a6a6] bg-white">
      <textarea
        id="body"
        wrap="off"
        spellCheck={false}
        defaultValue={BODY.join('\n')}
        className="h-full w-full resize-none overflow-hidden px-[2px] py-1 font-['Liberation_Mono','Courier_New',monospace] text-[13px] leading-[15px] outline-none"
      />
      <svg className="pointer-events-none absolute top-1 left-[2px] h-[240px] w-[930px] overflow-visible">
        <path d={squiggles()} fill="none" stroke="#ff0000" />
      </svg>
      <div className="absolute inset-y-0 right-0 flex w-4 flex-col items-center bg-[#f0f0f0] pt-2">
        <span className="border-x-[4px] border-b-[4px] border-x-transparent border-b-[#555]" />
        <div className="mt-[18px] h-[150px] w-[15px] rounded-[2px] border border-[#979797] bg-linear-to-r from-[#f3f3f3] to-[#cdcdd0]" />
      </div>
    </div>
  );
}

function RequestForm() {
  const cell = 'flex items-center bg-[#e0e5e9] px-1';
  return (
    <form className="rounded-[5px] border-[5px] border-t-[30px] border-[#e0e5e9] bg-white px-3 pt-3 pb-[21px] text-[14px]">
      <div className="grid grid-cols-[91px_1fr] grid-rows-[25px_252px_24px_27px] gap-x-[3px] gap-y-[2px]">
        <label htmlFor="title" className={cell}>
          Title *<sup className="ml-[7px] text-[11px] font-bold text-[#126495]">?</sup>
        </label>
        <input
          id="title"
          defaultValue="Chromatogram unavailable after import of results"
          className="my-px w-[510px] border border-[#dde2ee] border-t-[#a6a6a6] px-[2px] outline-none"
        />
        <label htmlFor="body" className={cell}>Body</label>
        <MessageBox />
        <label htmlFor="render" className={cell}>Render As</label>
        <div className="relative my-px flex w-[91px] items-center border border-[#dde2ee] border-t-[#a6a6a6]">
          <select id="render" className="w-full appearance-none pl-1 outline-none">
            <option>Plain Text</option>
          </select>
          <span className="pointer-events-none absolute right-1 border-x-[4px] border-t-[4px] border-x-transparent border-t-black" />
        </div>
        <span className={cell}>Attachments</span>
        <a href="#attach" className="flex items-center gap-1 pl-[2px] text-[#126495]">
          <Paperclip className="h-4 w-4 -rotate-12 text-[#444]" strokeWidth={1.5} />
          Attach a file
        </a>
      </div>
      <div className="mt-[17px] flex gap-[9px] pl-[2px]">
        <button type="button" className="h-[23px] w-[59px] rounded-[4px] border border-[#b4b4b4] bg-linear-to-b from-white to-[#e4e4e4] text-[12px] font-bold text-[#126495]">SUBMIT</button>
        <button type="button" className="h-[23px] w-[59px] rounded-[4px] border border-[#b4b4b4] bg-linear-to-b from-white to-[#e4e4e4] text-[12px] font-bold text-[#126495]">CANCEL</button>
      </div>
    </form>
  );
}

function LabKeyPage() {
  return (
    <main className="flex min-h-0 flex-1 flex-col bg-[#f8f8f8] font-[Roboto,sans-serif]">
      <header className="flex h-[72px] shrink-0 bg-white pr-[10px] pl-[30px]">
        <svg viewBox="0 0 84 52" className="mt-3 h-[52px] w-[84px]">
          <path d="M0 33h20l6 5 14-7c16 6 26 15 44 20H0z" fill="#78a4f0" />
          <path d="M12 0l1 7 6 4-4 3-1 25H9l1-25-5-3 5-4zM18 17h6v22h-6zM27 39V20l3-3h5l2 4v18z" fill="#1f5aa8" />
          <path d="M26 26h6v13h-6z" fill="#123f7c" />
        </svg>
        <p className="mt-[34px] ml-10 text-[19px] leading-[30px] text-[#666]">MacCoss Lab Software</p>
        <div className="mt-2 ml-auto flex h-[29px] w-[328px] items-center border border-[#b8b8b8] bg-white pl-[6px] text-[#777]">
          <Search className="h-[14px] w-[14px]" strokeWidth={3} />
          <input aria-label="Search site" placeholder="Search MacCoss Lab Software" className="ml-[2px] min-w-0 flex-1 text-[15px] outline-none placeholder:text-[#777]" />
        </div>
      </header>
      <nav className="flex h-7 shrink-0 items-end bg-[#126495] pr-[27px] pl-[21px] text-[14px] text-white">
        <a href="#home" className="flex h-[26px] items-center border border-[#3f83ab] bg-[#0b4468] pr-3 pl-2">
          <svg viewBox="0 0 16 14" className="h-[14px] w-4">
            <path d="M0 0h7v2h9v12H0z" fill="#fff" />
            <path d="M3 5h10M3 8h10M3 11h10" stroke="#0b4468" strokeWidth="1.5" />
          </svg>
          <span className="mr-3 ml-[6px] border-y-[5px] border-l-[5px] border-y-transparent border-l-[#6f93aa]" />
          Home
        </a>
        <div className="ml-auto flex h-full items-center gap-[22px]">
          <button className="flex items-center gap-[5px]">Help <Caret /></button>
          <button className="flex items-center gap-[5px]">natbat <Caret /></button>
        </div>
      </nav>
      <div className="flex h-[42px] shrink-0 items-end bg-[#e0e5e9] pr-[28px] pl-[19px]">
        <a href="#support" className="self-center text-[19px] text-[#126495]">support</a>
        <a href="#start" className="ml-auto flex h-8 w-[89px] items-center justify-center rounded-t-[4px] bg-[#f8f8f8] text-[15px] font-bold">Start Page</a>
      </div>
      <div className="flex flex-1 flex-col pt-[10px] pr-[21px] pl-[19px]">
        <p className="text-[14px] leading-5">
          <a href="#requests" className="text-[#126495]">Requests</a> &gt;
        </p>
        <h1 className="mb-5 text-[26px] leading-7">New Request</h1>
        <RequestForm />
        <a href="#labkey" className="mx-auto mt-auto mb-1 text-[15px] leading-5 text-[#126495]">Powered by LabKey</a>
      </div>
    </main>
  );
}

function BookmarkIcon({ i }: { i: number }) {
  if (i === 0) {
    return (
      <svg viewBox="0 0 14 16" className="h-4 w-[14px]">
        <path d="M1 1h12v14H1z" fill="#8fc1e0" stroke="#4b86ae" />
        <circle cx="8" cy="6" r="3" fill="none" stroke="#1e5a86" strokeWidth="1.5" />
        <path d="M6 8l-3 4" stroke="#1e5a86" strokeWidth="1.5" />
      </svg>
    );
  }
  if (i === 2) {
    return (
      <svg viewBox="0 0 16 16" className="h-4 w-4">
        <path d="M8 4h8v8H8z" fill="#fff" stroke="#0072c6" />
        <path d="M9 5l3 4 4-4" fill="none" stroke="#0072c6" />
        <path d="M0 2l9-2v16l-9-2z" fill="#0072c6" />
        <circle cx="4.5" cy="8" r="2" fill="none" stroke="#fff" strokeWidth="1.5" />
      </svg>
    );
  }
  return <FolderMini />;
}

function FirefoxWindow() {
  return (
    <section className="absolute top-[109px] right-[527px] bottom-[110px] left-[35px] flex flex-col rounded-[6px] border border-[#31414f] bg-[linear-gradient(180deg,#5a86c4,#2b74cc_30%,#1ca8f8_70%,#3fc2fb)] px-[5px] pb-[5px] text-[12px] shadow-[0_3px_14px_3px_rgba(0,0,0,0.55)] ring-1 ring-white/60 ring-inset">
      <header className="-mx-[4px] flex h-[53px] shrink-0 flex-col rounded-t-[5px] bg-[linear-gradient(rgba(255,255,255,0.35),rgba(70,100,140,0.12)),linear-gradient(90deg,#6f94c6_0%,#8faed2_6%,#ced8df_11%,#ccd8e2_60%,#c6d1dc_93%,#f4f6f7_97%)] pl-[5px]">
        <div className="flex h-[26px] items-start">
          <nav className="flex gap-[11px] pt-[2px] pl-1">
            {[['', 'F', 'ile'], ['', 'E', 'dit'], ['', 'V', 'iew'], ['Hi', 's', 'tory'], ['', 'B', 'ookmarks'], ['', 'T', 'ools'], ['', 'H', 'elp']].map(([a, u, b]) => (
              <button key={a + u + b}>{a}<u>{u}</u>{b}</button>
            ))}
          </nav>
          <div className="mr-[4px] ml-auto flex h-[20px] rounded-b-[4px] border border-t-0 border-[#8d979f] bg-white/80">
            <button aria-label="Minimize window" className="flex w-7 items-center justify-center border-r border-[#aaa]">
              <span className="mt-1 h-[5px] w-3 border border-[#555] bg-white" />
            </button>
            <button aria-label="Restore window" className="flex w-7 items-center justify-center border-r border-[#aaa]">
              <span className="h-[10px] w-3 border-2 border-[#777] bg-white" />
            </button>
            <button aria-label="Close window" className="flex w-[46px] items-center justify-center">
              <X className="h-[14px] w-[14px] text-[#555]" strokeWidth={3} />
            </button>
          </div>
        </div>
        <div className="flex h-[27px] items-center">
          <div className="flex w-[222px] items-center pl-[23px]">
            <svg viewBox="0 0 16 16" className="mr-[6px] h-4 w-4">
              <rect width="16" height="16" rx="2" fill="#e8101c" />
              <path d="M8 2l2 7 4 4H9l-1-3-1 3H2l4-4z" fill="#fff" />
            </svg>
            <button className="flex-1 text-left">ExPASy - PROSITE</button>
            <button aria-label="Close ExPASy tab" className="mr-[9px]">
              <X className="h-[10px] w-[10px] text-[#666]" strokeWidth={4} />
            </button>
          </div>
          <div className="flex h-full w-[214px] items-center rounded-t-[10px] border border-b-0 border-[#7b8a99] bg-[#e8f1fb] pl-3">
            <svg viewBox="0 0 48 48" className="mr-[6px] h-4 w-4 bg-white">
              <SkylineArt dark />
            </svg>
            <button className="flex-1 text-left whitespace-nowrap">New Request: /home/supp...</button>
            <button aria-label="Close request tab" className="mr-3">
              <X className="h-[10px] w-[10px] text-[#666]" strokeWidth={4} />
            </button>
          </div>
          <button aria-label="New tab" className="ml-[11px] text-[20px] leading-5 text-[#444]">+</button>
        </div>
      </header>
      <div className="flex min-h-0 flex-1 flex-col border border-[#7d93ab]">
        <div className="flex h-10 shrink-0 items-center bg-linear-to-b from-[#e8f1fb] to-[#dbe9f8] pr-[14px] pl-[3px] text-[#4c5560]">
          <button aria-label="Go back" className="z-10 flex h-8 w-8 shrink-0 items-center justify-center rounded-full border border-[#9fb0c2] bg-[#f0f6fc]">
            <FaArrowLeft className="h-4 w-4" />
          </button>
          <div className="-ml-3 flex h-6 flex-1 items-center border border-[#a9bacb] bg-white pl-5">
            <Info className="h-[14px] w-[14px] text-[#888]" />
            <FaLock className="ml-1 h-[13px] w-[13px] text-[#45a329]" />
            <input
              aria-label="Address"
              defaultValue="https://skyline.ms/announcements/home/support/insert.view?returnUrl=%2Fproject%2Fhome%2Fsupport%2Fbegin.view%3F"
              className="ml-[6px] min-w-0 flex-1 border-l border-[#ccc] bg-[linear-gradient(90deg,#777_44px,#000_44px,#000_99px,#777_99px)] bg-clip-text pl-[6px] text-[11px] text-transparent outline-none"
            />
            <button aria-label="Reload" className="flex h-[18px] w-[33px] items-center justify-center border-l border-[#ccc] text-[#888]">
              <RotateCw className="h-3 w-3" strokeWidth={3} />
            </button>
          </div>
          <div className="ml-[6px] flex h-6 w-[258px] items-center border border-[#a9bacb] bg-white px-[6px]">
            <Search className="h-[14px] w-[14px] -scale-x-100 text-[#888]" />
            <input aria-label="Search the web" defaultValue="mccoss skyline" className="ml-[5px] min-w-0 flex-1 text-[11px] text-black outline-none" />
            <FaArrowLeft className="h-[10px] w-[10px] rotate-180 text-[#999]" />
          </div>
          <div className="flex items-center gap-5 pl-[14px]">
            <button aria-label="Bookmark page"><FaRegStar className="h-4 w-4" /></button>
            <button aria-label="Bookmarks list" className="-ml-1"><ClipboardList className="h-4 w-4" strokeWidth={2.5} /></button>
            <button aria-label="Downloads"><FaArrowDown className="h-4 w-4" /></button>
            <button aria-label="Home page"><FaHome className="h-[17px] w-[17px]" /></button>
            <button aria-label="Save to Pocket"><FaGetPocket className="h-4 w-4" /></button>
            <button aria-label="Menu" className="flex h-8 items-center border-l border-[#c5d3e2] pl-[14px]"><FaBars className="h-4 w-4" /></button>
          </div>
        </div>
        <div className="flex h-6 shrink-0 items-center gap-[7px] overflow-hidden border-b border-[#a9bacb] bg-[#dbe9f8] pl-[9px]">
          {BOOKMARKS.map((b, i) => (
            <a key={b} href="#bookmark" className="flex items-center gap-[5px] whitespace-nowrap">
              <BookmarkIcon i={i} />
              {b}
            </a>
          ))}
        </div>
        <LabKeyPage />
      </div>
    </section>
  );
}

function LibraryMatchWindow() {
  return (
    <section className="absolute top-[582px] right-[243px] bottom-[380px] left-[666px] flex flex-col border border-[#5d666c] bg-white/85 px-[5px] pb-[5px] text-[11px] shadow-[0_2px_8px_2px_rgba(0,0,0,0.4)] backdrop-blur-sm">
      <header className="flex h-[23px] shrink-0 items-center justify-between pl-[2px]">
        <h2>Library Match</h2>
        <button aria-label="Close library match" className="flex h-4 w-4 items-center justify-center rounded-[2px] border border-[#777] bg-white">
          <X className="h-[10px] w-[10px] text-[#444]" strokeWidth={3} />
        </button>
      </header>
      <div className="min-h-0 flex-1 border border-[#444] bg-white p-px">
        <div className="h-full border border-[#aaa]">
          <SpectrumChart />
        </div>
      </div>
    </section>
  );
}

export default function App() {
  return (
    <div className="flex h-screen min-h-[1200px] overflow-hidden bg-black font-['Open_Sans','Noto_Sans',sans-serif] text-black">
      <div className="min-w-0 flex-1">
        <div className="relative isolate h-[90%] overflow-hidden">
          <LeftWallpaper />
          <div className="relative">
            <DesktopIcons />
          </div>
          <SkylineWindow />
          <Taskbar />
        </div>
      </div>
      <div className="relative isolate min-w-0 flex-1 overflow-hidden">
        <RightWallpaper />
        <ExplorerWindow />
        <FirefoxWindow />
        <LibraryMatchWindow />
      </div>
    </div>
  );
}
